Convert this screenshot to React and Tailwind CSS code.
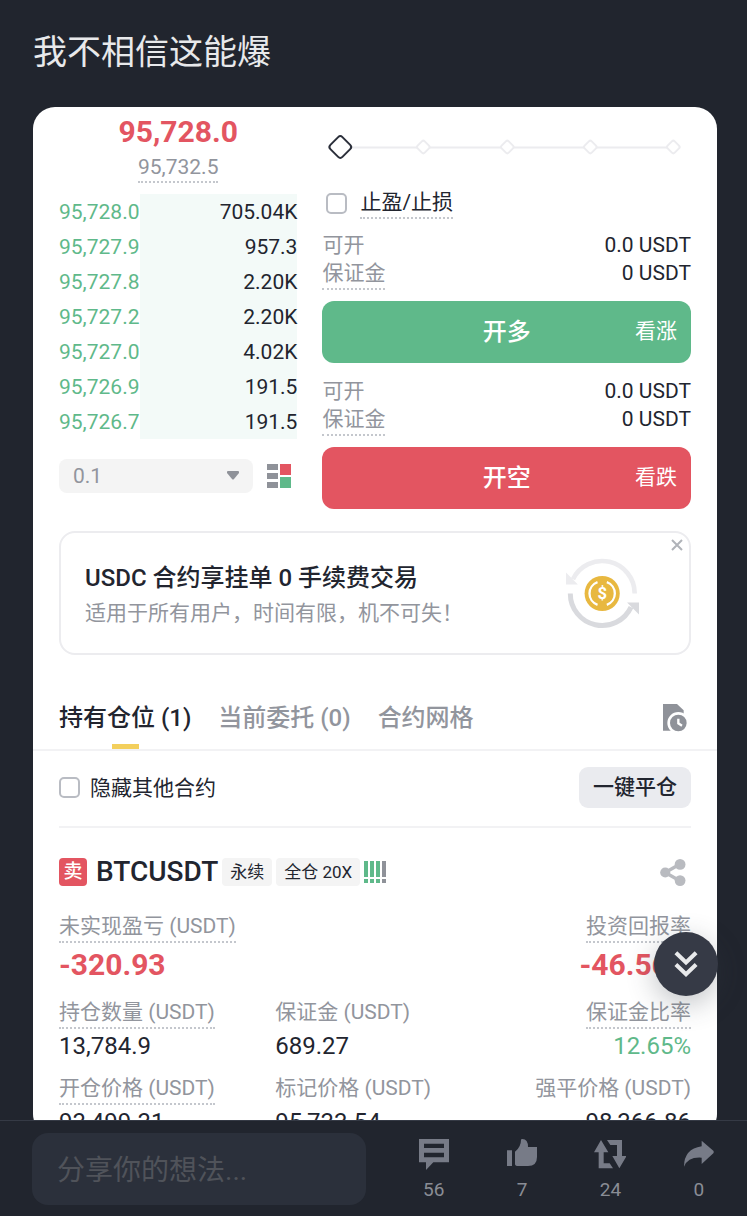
import { useState } from 'react';
import clsx from 'clsx';

const orders = [
  { price: '95,728.0', amount: '705.04K' },
  { price: '95,727.9', amount: '957.3' },
  { price: '95,727.8', amount: '2.20K' },
  { price: '95,727.2', amount: '2.20K' },
  { price: '95,727.0', amount: '4.02K' },
  { price: '95,726.9', amount: '191.5' },
  { price: '95,726.7', amount: '191.5' },
];

const tabs = ['持有仓位 (1)', '当前委托 (0)', '合约网格'];

const Underlined = ({ children, plain }) => (
  <span
    className={clsx(
      'inline-block border-b-2 border-dotted pb-px text-[21px] leading-[28px]',
      plain ? 'border-transparent' : 'border-[#c4c7cd]'
    )}
  >
    {children}
  </span>
);

const Checkbox = ({ id, checked, onChange }) => (
  <input
    id={id}
    type="checkbox"
    checked={checked}
    onChange={onChange}
    className="size-[21px] shrink-0 appearance-none rounded-[5px] border-2 border-[#b9bcc3] bg-white checked:bg-[#5fb98a]"
  />
);

const OrderBook = () => (
  <div className="flex flex-col">
    <div className="pt-[7px] text-center">
      <div className="text-[30px] leading-[36px] font-bold text-[#e35561]">95,728.0</div>
      <div className="mt-[3px] inline-block border-b-2 border-dotted border-[#c4c7cd] align-top text-[21px] leading-[28px] text-[#92959d]">
        95,732.5
      </div>
    </div>

    <table className="mt-[11px] w-full text-[21px]">
      <tbody>
        {orders.map((o) => (
          <tr key={o.price} className="h-[35px]">
            <td className="w-[34%] p-0 leading-[28px] text-[#5fb98a]">{o.price}</td>
            <td className="bg-[#f3faf8] p-0 text-right leading-[28px] text-[#22252f]">{o.amount}</td>
          </tr>
        ))}
      </tbody>
    </table>

    <div className="mt-5 flex items-center gap-[14px]">
      <div className="relative flex-1">
        <select
          aria-label="精度"
          className="block h-[34px] w-full appearance-none rounded-lg bg-[#f4f4f4] px-[14px] text-[21px] leading-[28px] text-[#92959d]"
        >
          <option>0.1</option>
        </select>
        <svg viewBox="0 0 12 9" className="pointer-events-none absolute top-3 right-[14px] h-[9px] w-3" fill="#8f9299">
          <path d="M1 0h10q1 0 1 1v1L7 8q-1 1-2 0L0 2V1q0-1 1-1Z" />
        </svg>
      </div>
      <button type="button" aria-label="盘口" className="mr-[6px]">
        <svg viewBox="0 0 24 24" className="size-6">
          <path d="M0 0h11v6H0zM0 9h11v6H0zM0 18h11v6H0z" fill="#8f9299" />
          <path d="M13 0h11v11H13z" fill="#e35561" />
          <path d="M13 13h11v11H13z" fill="#5fb98a" />
        </svg>
      </button>
    </div>
  </div>
);

const Available = () => (
  <div className="text-[21px] leading-[28px] text-[#22252f]">
    <div className="flex justify-between">
      <span className="text-[#92959d]">可开</span>
      <span>0.0 USDT</span>
    </div>
    <div className="flex justify-between">
      <span className="flex text-[#92959d]">
        <Underlined>保证金</Underlined>
      </span>
      <span>0 USDT</span>
    </div>
  </div>
);

const TradeButton = ({ label, hint, className }) => (
  <button
    type="button"
    className={clsx('mt-[11px] grid h-[62px] w-full grid-cols-[1fr_auto_1fr] items-center rounded-xl px-[14px] text-white', className)}
  >
    <span />
    <span className="text-2xl font-medium">{label}</span>
    <span className="text-right text-[21px]">{hint}</span>
  </button>
);

const OrderForm = () => {
  const [tpsl, setTpsl] = useState(false);
  const [amount, setAmount] = useState(0);

  return (
    <div>
      <div className="relative mt-[23px] h-[34px]">
        <svg viewBox="0 0 368 34" className="h-[34px] w-full" fill="white" strokeWidth="2">
          <path d="M30 17.5h322" stroke="#ececef" />
          {[101, 185, 268, 351].map((x) => (
            <rect key={x} x={x - 5} y="12" width="10" height="10" rx="2" stroke="#ececef" transform={`rotate(45 ${x} 17)`} />
          ))}
          <rect x="9.5" y="8.5" width="17" height="17" rx="3" stroke="#2b2f3a" transform="rotate(45 18 17)" />
        </svg>
        <input
          type="range"
          min="0"
          max="100"
          step="25"
          value={amount}
          onChange={(e) => setAmount(e.target.value)}
          aria-label="数量"
          className="absolute inset-0 w-full opacity-0"
        />
      </div>

      <div className="mt-[23px] flex items-center gap-[13px] pl-1">
        <Checkbox id="tpsl" checked={tpsl} onChange={(e) => setTpsl(e.target.checked)} />
        <label htmlFor="tpsl" className="border-b-2 border-dotted border-[#c4c7cd] text-[21px] leading-[30px] text-[#22252f]">
          止盈/止损
        </label>
      </div>

      <div className="mt-3">
        <Available />
        <TradeButton label="开多" hint="看涨" className="bg-[#5fb98a]" />
      </div>
      <div className="mt-[14px]">
        <Available />
        <TradeButton label="开空" hint="看跌" className="bg-[#e35561]" />
      </div>
    </div>
  );
};

const CoinIcon = () => (
  <svg viewBox="0 0 220 212" className="h-[71px] w-[73px]" fill="none">
    <path d="M207 106A98 98 0 0 0 21 63" stroke="#ececef" strokeWidth="14" />
    <path d="M0 43v36h36Z" fill="#ececef" />
    <path d="M13 106A96 96 0 0 0 196 147" stroke="#d9dade" strokeWidth="15" />
    <path d="M220 133h-36l36 36Z" fill="#d9dade" />
    <circle cx="109" cy="106" r="53" fill="#e8b840" />
    <path d="M95 72a36 36 0 0 0 0 68M123 72a36 36 0 0 1 0 68" stroke="white" strokeWidth="7" />
    <text x="109" y="124" textAnchor="middle" fontSize="50" fontWeight="700" fill="white">$</text>
  </svg>
);

const Banner = () => (
  <section className="relative mt-[22px] flex h-[124px] items-center justify-between rounded-2xl border-2 border-[#ececef] pr-[50px] pl-6">
    <div className="pt-1">
      <h2 className="text-2xl leading-[36px] font-medium text-[#22252f]">USDC 合约享挂单 0 手续费交易</h2>
      <p className="text-[21px] leading-[34px] text-[#92959d]">适用于所有用户，时间有限，机不可失！</p>
    </div>
    <CoinIcon />
    <button type="button" aria-label="关闭" className="absolute top-[6px] right-[6px]">
      <svg viewBox="0 0 12 12" className="size-3" stroke="#b0b3b9" strokeWidth="2">
        <path d="m1 1 10 10M11 1 1 11" />
      </svg>
    </button>
  </section>
);

const Stat = ({ label, plain, right, children }) => (
  <div className={clsx('flex flex-col text-[#92959d]', right && 'text-right')}>
    <span className={clsx('flex', right && 'justify-end')}>
      <Underlined plain={plain}>{label}</Underlined>
    </span>
    {children}
  </div>
);

const Value = ({ children, className }) => (
  <span className={clsx('mt-[3px] text-2xl leading-[28px]', className || 'text-[#22252f]')}>{children}</span>
);

const Tag = ({ children }) => (
  <span className="ml-1 flex h-7 items-center rounded bg-[#f4f4f4] px-2 text-[17px] leading-[28px] text-[#22252f]">{children}</span>
);

const Position = () => (
  <section className="px-[26px] pt-[30px]">
    <div className="flex items-center justify-between">
      <div className="flex h-7 items-center">
        <span className="flex size-7 items-center justify-center rounded bg-[#e35561] text-[19px] font-medium text-white">卖</span>
        <h3 className="ml-[9px] text-[28px] leading-[32px] font-medium text-[#22252f]">BTCUSDT</h3>
        <Tag>永续</Tag>
        <Tag>全仓 20X</Tag>
        <svg viewBox="0 0 22 22" className="ml-1 h-[22px] w-[22px]">
          <path d="M0 0h4v16H0zM6 0h4v16H6zM12 0h4v16h-4zM0 18h4v4H0zM6 18h4v4H6zM12 18h4v4h-4z" fill="#5fb98a" />
          <path d="M18 0h4v16h-4zM18 18h4v4h-4z" fill="#8f9299" />
        </svg>
      </div>
      <button type="button" aria-label="分享仓位" className="mr-[5px]">
        <svg viewBox="0 0 76 80" className="h-[27px] w-[26px]" fill="#b9bbc0" stroke="#b9bbc0">
          <path d="M59 15 15 40l44 25" fill="none" strokeWidth="10" />
          <circle cx="15" cy="40" r="15" stroke="none" />
          <circle cx="59" cy="16" r="16" stroke="none" />
          <circle cx="59" cy="64" r="16" stroke="none" />
        </svg>
      </button>
    </div>

    <div className="mt-[26px] flex justify-between">
      <Stat label="未实现盈亏 (USDT)">
        <span className="mt-1 text-[30px] leading-[36px] font-bold text-[#e35561]">-320.93</span>
      </Stat>
      <Stat label="投资回报率" right>
        <span className="mt-1 text-[30px] leading-[36px] font-bold text-[#e35561]">-46.56%</span>
      </Stat>
    </div>

    <div className="mt-[15px] grid grid-cols-[216fr_208fr_207fr]">
      <Stat label="持仓数量 (USDT)"><Value>13,784.9</Value></Stat>
      <Stat label="保证金 (USDT)" plain><Value>689.27</Value></Stat>
      <Stat label="保证金比率" right><Value className="text-[#5fb98a]">12.65%</Value></Stat>
    </div>

    <div className="mt-[14px] grid grid-cols-[216fr_208fr_207fr]">
      <Stat label="开仓价格 (USDT)"><Value>93,499.31</Value></Stat>
      <Stat label="标记价格 (USDT)" plain><Value>95,733.54</Value></Stat>
      <Stat label="强平价格 (USDT)" plain right><Value>98,366.86</Value></Stat>
    </div>
  </section>
);

const actions = [
  { label: '评论', count: 56, icon: <path d="M0 0h90v70H43L21 93V70H0ZM15 14v13h60V14ZM15 41v14h60V41Z" fillRule="evenodd" /> },
  { label: '赞', count: 7, icon: <path d="M0 34h15v47H0ZM24 38Q42 24 42 2q0-2 4-2 17 0 17 24h27v30q0 27-27 27H34q-10 0-10-6Z" /> },
  { label: '转发', count: 24, icon: <path d="M18 3 40 40H26v33h18l10 15H11V40H-3ZM36 3h45v48h14L73 88 52 51h14V18H46Z" /> },
  { label: '分享', count: 0, icon: <path d="M53 5 88 35q3 4 0 8L53 75V56Q12 53 0 83q0-53 53-61Z" /> },
];

const BottomBar = () => (
  <footer className="grid h-24 shrink-0 grid-cols-[334fr_353fr] items-center gap-[23px] border-t border-[#353a45] bg-[#21252e] pr-1 pl-8">
    <input
      type="text"
      aria-label="分享你的想法"
      placeholder="分享你的想法..."
      className="h-[72px] w-full min-w-0 rounded-2xl bg-[#2b303b] px-[25px] pt-1 text-[28px] text-[#e8e9eb] placeholder:text-[#50535a]"
    />
    <div className="flex">
      {actions.map((a) => (
        <button key={a.label} type="button" aria-label={a.label} className="flex flex-1 flex-col items-center gap-1 pt-2 text-[#777b87]">
          <svg viewBox="-3 0 96 93" className="h-[31px] w-8" fill="currentColor">{a.icon}</svg>
          <span className="text-[19px] leading-[32px] text-[#8a8d95]">{a.count}</span>
        </button>
      ))}
    </div>
  </footer>
);

const App = () => {
  const [active, setActive] = useState(0);
  const [hideOthers, setHideOthers] = useState(false);

  return (
    <div className="flex h-screen flex-col bg-[#21252e] font-[Roboto,'Noto_Sans_CJK_SC',sans-serif]">
      <div className="relative min-h-0 flex-1">
        <main className="h-full overflow-y-auto pr-[30px] pl-[33px] [scrollbar-width:none]">
          <h1 className="pt-[28px] text-[34px] leading-[48px] text-[#e8e9eb]">我不相信这能爆</h1>

          <div className="mt-[31px] overflow-hidden rounded-[22px] bg-white">
            <div className="px-[26px]">
              <div className="grid grid-cols-[238fr_368fr] gap-[25px]">
                <OrderBook />
                <OrderForm />
              </div>
              <Banner />
            </div>

            {/* Tabs */}
            <nav className="mt-[45px] flex items-start justify-between border-b-2 border-[#f2f2f4] px-[26px]">
              <div className="flex gap-[27px]">
                {tabs.map((tab, i) => (
                  <button
                    key={tab}
                    type="button"
                    onClick={() => setActive(i)}
                    className={clsx(
                      'flex flex-col items-center gap-2 text-2xl leading-[36px] font-medium',
                      i === active ? 'text-[#22252f]' : 'text-[#92959d]'
                    )}
                  >
                    {tab}
                    <span className={clsx('h-[5px] w-[27px]', i === active && 'bg-[#f3cf5c]')} />
                  </button>
                ))}
              </div>
              <button type="button" aria-label="历史记录" className="mt-1 mr-1">
                <svg viewBox="0 0 72 84" className="h-7 w-6" fill="#8f9299">
                  <path d="M0 0h42l20 19v61H0Z" />
                  <circle cx="46" cy="57" r="33" fill="white" />
                  <circle cx="46" cy="57" r="25" />
                  <path d="M46 44v14l11 7" fill="none" stroke="white" strokeWidth="7" />
                </svg>
              </button>
            </nav>

            <div className="px-[26px]">
              <div className="flex items-center justify-between border-b-2 border-[#f2f2f4] pt-4 pb-[18px]">
                <div className="flex items-center gap-[10px]">
                  <Checkbox id="hide-others" checked={hideOthers} onChange={(e) => setHideOthers(e.target.checked)} />
                  <label htmlFor="hide-others" className="text-[21px] leading-[28px] text-[#22252f]">隐藏其他合约</label>
                </div>
                <button type="button" className="h-[41px] rounded-[9px] bg-[#eaebef] px-[14px] text-[21px] font-medium text-[#22252f]">
                  一键平仓
                </button>
              </div>
            </div>

            <Position />
          </div>
        </main>

        {/* Scroll to bottom */}
        <button
          type="button"
          aria-label="向下"
          className="absolute right-[29px] bottom-[124px] flex size-16 items-center justify-center rounded-full bg-[#363a46] shadow-[0_8px_28px_rgba(54,58,70,0.3)]"
        >
          <svg viewBox="0 0 70 80" className="h-[27px] w-6" fill="none" stroke="#e8e9eb" strokeWidth="12">
            <path d="m5 5 30 29L65 5M5 40l30 29 30-29" />
          </svg>
        </button>
      </div>

      <BottomBar />
    </div>
  );
};

export default App;
